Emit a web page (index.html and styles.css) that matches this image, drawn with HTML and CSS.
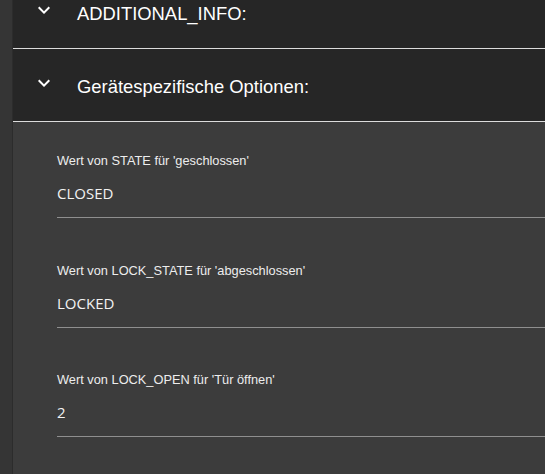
FILE: index.html
```html
<!DOCTYPE html>
<html lang="de">
<head>
<meta charset="utf-8">
<title>Gerätespezifische Optionen</title>
<link rel="stylesheet" href="styles.css">
</head>
<body>
<div class="app">
  <div class="rail"></div>
  <main class="main">
    <div class="panels">
      <section class="panel">
        <div class="panel-head">
          <svg class="chev" viewBox="0 0 24 24" width="24" height="24"><path d="M16.59 8.59 12 13.17 7.41 8.59 6 10l6 6 6-6z"/></svg>
          <span class="panel-title">ADDITIONAL_INFO:</span>
        </div>
      </section>
      <section class="panel">
        <div class="panel-head">
          <svg class="chev" viewBox="0 0 24 24" width="24" height="24"><path d="M16.59 8.59 12 13.17 7.41 8.59 6 10l6 6 6-6z"/></svg>
          <span class="panel-title">Gerätespezifische Optionen:</span>
        </div>
        <div class="panel-body">
          <div class="field">
            <label class="field-label">Wert von STATE für 'geschlossen'</label>
            <div class="field-input">CLOSED</div>
          </div>
          <div class="field">
            <label class="field-label">Wert von LOCK_STATE für 'abgeschlossen'</label>
            <div class="field-input">LOCKED</div>
          </div>
          <div class="field">
            <label class="field-label">Wert von LOCK_OPEN für 'Tür öffnen'</label>
            <div class="field-input">2</div>
          </div>
        </div>
      </section>
    </div>
  </main>
</div>
</body>
</html>
```

FILE: styles.css
```css
html, body {
  margin: 0;
  padding: 0;
  height: 100%;
  overflow: hidden;
  background: #3c3c3c;
  font-family: "Liberation Sans", Arial, sans-serif;
}

.app {
  display: flex;
  min-height: 100%;
}

.rail {
  width: 12px;
  flex: 0 0 12px;
  background: #353535;
  border-right: 1px solid #2c2c2c;
}

.main {
  flex: 1;
  min-width: 0;
  background: #3c3c3c;
}

.panels {
  margin-top: -24px;
}

.panel-head {
  height: 72px;
  background: #262626;
  border-bottom: 1px solid #dcdcdc;
  display: flex;
  align-items: center;
  padding-left: 19px;
}

.chev {
  width: 24px;
  height: 24px;
  fill: #ffffff;
  margin-top: -4px;
  margin-right: 21px;
  flex: 0 0 24px;
}

.panel-title {
  color: #ffffff;
  font-size: 18.4px;
  margin-top: 3px;
}

.panel-body {
  padding: 32px 0 0 44px;
}

.field {
  margin-bottom: 45.5px;
}

.field-label {
  display: block;
  font-size: 12.8px;
  line-height: 14px;
  color: #ededed;
}

.field-input {
  margin-top: 15px;
  font-family: "Open Sans", "Noto Sans", sans-serif;
  font-size: 15px;
  line-height: 20px;
  color: #f2f2f2;
  padding-bottom: 14px;
  border-bottom: 1px solid #8f8f8f;
}
```
